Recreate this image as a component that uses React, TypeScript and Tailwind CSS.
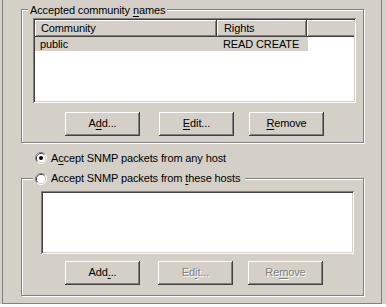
import type { ReactNode } from 'react';

const raised =
  'shadow-[inset_-1px_-1px_0_#404040,inset_1px_1px_0_#ffffff,inset_-2px_-2px_0_#808080,inset_2px_2px_0_#d4d0c8]';
const sunken =
  'shadow-[inset_1px_1px_0_#808080,inset_-1px_-1px_0_#ffffff,inset_2px_2px_0_#404040,inset_-2px_-2px_0_#d4d0c8]';
const etched = 'border border-[#808080] shadow-[inset_1px_1px_0_#ffffff,1px_1px_0_#ffffff]';
const headerCell =
  'h-full shadow-[inset_-1px_-1px_0_#404040,inset_1px_1px_0_#ffffff,inset_-2px_-2px_0_#808080]';
const headerFill =
  'h-full shadow-[inset_0_-1px_0_#404040,inset_1px_1px_0_#ffffff,inset_0_-2px_0_#808080]';

function U({ children }: { children: ReactNode }) {
  return <span className="underline decoration-1 underline-offset-2">{children}</span>;
}

function Radio({ checked }: { checked?: boolean }) {
  return (
    <svg width="12" height="12" viewBox="0 0 12 12" className="shrink-0">
      <path d="M2.11 9.89 A5.5 5.5 0 0 1 9.89 2.11" stroke="#808080" fill="none" />
      <path d="M9.89 2.11 A5.5 5.5 0 0 1 2.11 9.89" stroke="#ffffff" fill="none" />
      <path d="M2.82 9.18 A4.5 4.5 0 0 1 9.18 2.82" stroke="#404040" fill="none" />
      <path d="M9.18 2.82 A4.5 4.5 0 0 1 2.82 9.18" stroke="#d4d0c8" fill="none" />
      <circle cx="6" cy="6" r="4" fill="#ffffff" />
      {checked && <circle cx="6" cy="6" r="2" fill="#000000" />}
    </svg>
  );
}

function Btn({
  children,
  disabled,
  className = '',
}: {
  children: ReactNode;
  disabled?: boolean;
  className?: string;
}) {
  return (
    <div
      className={`w-[75px] h-[24px] flex items-center justify-center pb-[1px] bg-[#d4d0c8] ${raised} ${
        disabled ? 'text-[#808080] [text-shadow:1px_1px_0_#ffffff]' : ''
      } ${className}`}
    >
      <span className="leading-[13px]">{children}</span>
    </div>
  );
}

export default function App() {
  return (
    <div className="w-[386px] h-[307px] overflow-hidden bg-white text-[11px] tracking-[-0.12px] text-black font-['Liberation_Sans',Arial,sans-serif]">
      <div className="h-[304px] bg-[#d4d0c8]">
        <div className="ml-[2px] w-[380px] h-[304px] border-l border-r border-b border-[#808080] pt-[9px] pl-[18px]">
          {/* Accepted community names */}
          <div className={`relative w-[343px] h-[134px] ${etched}`}>
            <div className="absolute left-[6px] top-[-6px] px-[2px] bg-[#d4d0c8] leading-[13px]">
              Accepted community <U>n</U>ames
            </div>

            <div className={`ml-[11px] mt-[8px] w-[323px] h-[85px] p-[2px] bg-white ${sunken}`}>
              <div className="flex h-[17px] bg-[#d4d0c8] leading-[17px]">
                <div className={`w-[182px] pl-[6px] ${headerCell}`}>Community</div>
                <div className={`w-[90px] pl-[7px] ${headerCell}`}>Rights</div>
                <div className={`flex-1 ${headerFill}`} />
              </div>
              <div className="flex w-[273px] h-[14px] leading-[14px] bg-[#d4d0c8]">
                <div className="w-[182px] pl-[5px]">public</div>
                <div className="pl-[6px]">READ CREATE</div>
              </div>
            </div>

            <div className="flex mt-[9px] ml-[43px]">
              <Btn>
                A<U>d</U>d...
              </Btn>
              <Btn className="ml-[19px]">
                <U>E</U>dit...
              </Btn>
              <Btn className="ml-[15px]">
                <U>R</U>emove
              </Btn>
            </div>
          </div>

          {/* any host */}
          <div className="flex items-start mt-[9px] ml-[14px] h-[13px]">
            <Radio checked />
            <span className="ml-[4px] leading-[13px]">
              A<U>c</U>cept SNMP packets from any host
            </span>
          </div>

          {/* these hosts */}
          <div className={`relative mt-[13px] w-[343px] h-[118px] ${etched}`}>
            <div className="absolute left-[11px] top-[-7px] h-[13px] flex items-start pl-[2px] pr-[5px] bg-[#d4d0c8]">
              <div className="mt-[1px]">
                <Radio />
              </div>
              <span className="ml-[4px] leading-[13px]">
                Accept SNMP packets from <U>t</U>hese hosts
              </span>
            </div>

            <div className={`ml-[19px] mt-[12px] w-[313px] h-[63px] bg-white ${sunken}`} />

            <div className="flex mt-[7px] ml-[43px]">
              <Btn>
                Add<U>.</U>..
              </Btn>
              <Btn disabled className="ml-[18px]">
                Ed<U>i</U>t...
              </Btn>
              <Btn disabled className="ml-[15px]">
                Re<U>m</U>ove
              </Btn>
            </div>
          </div>
        </div>
      </div>
    </div>
  );
}
